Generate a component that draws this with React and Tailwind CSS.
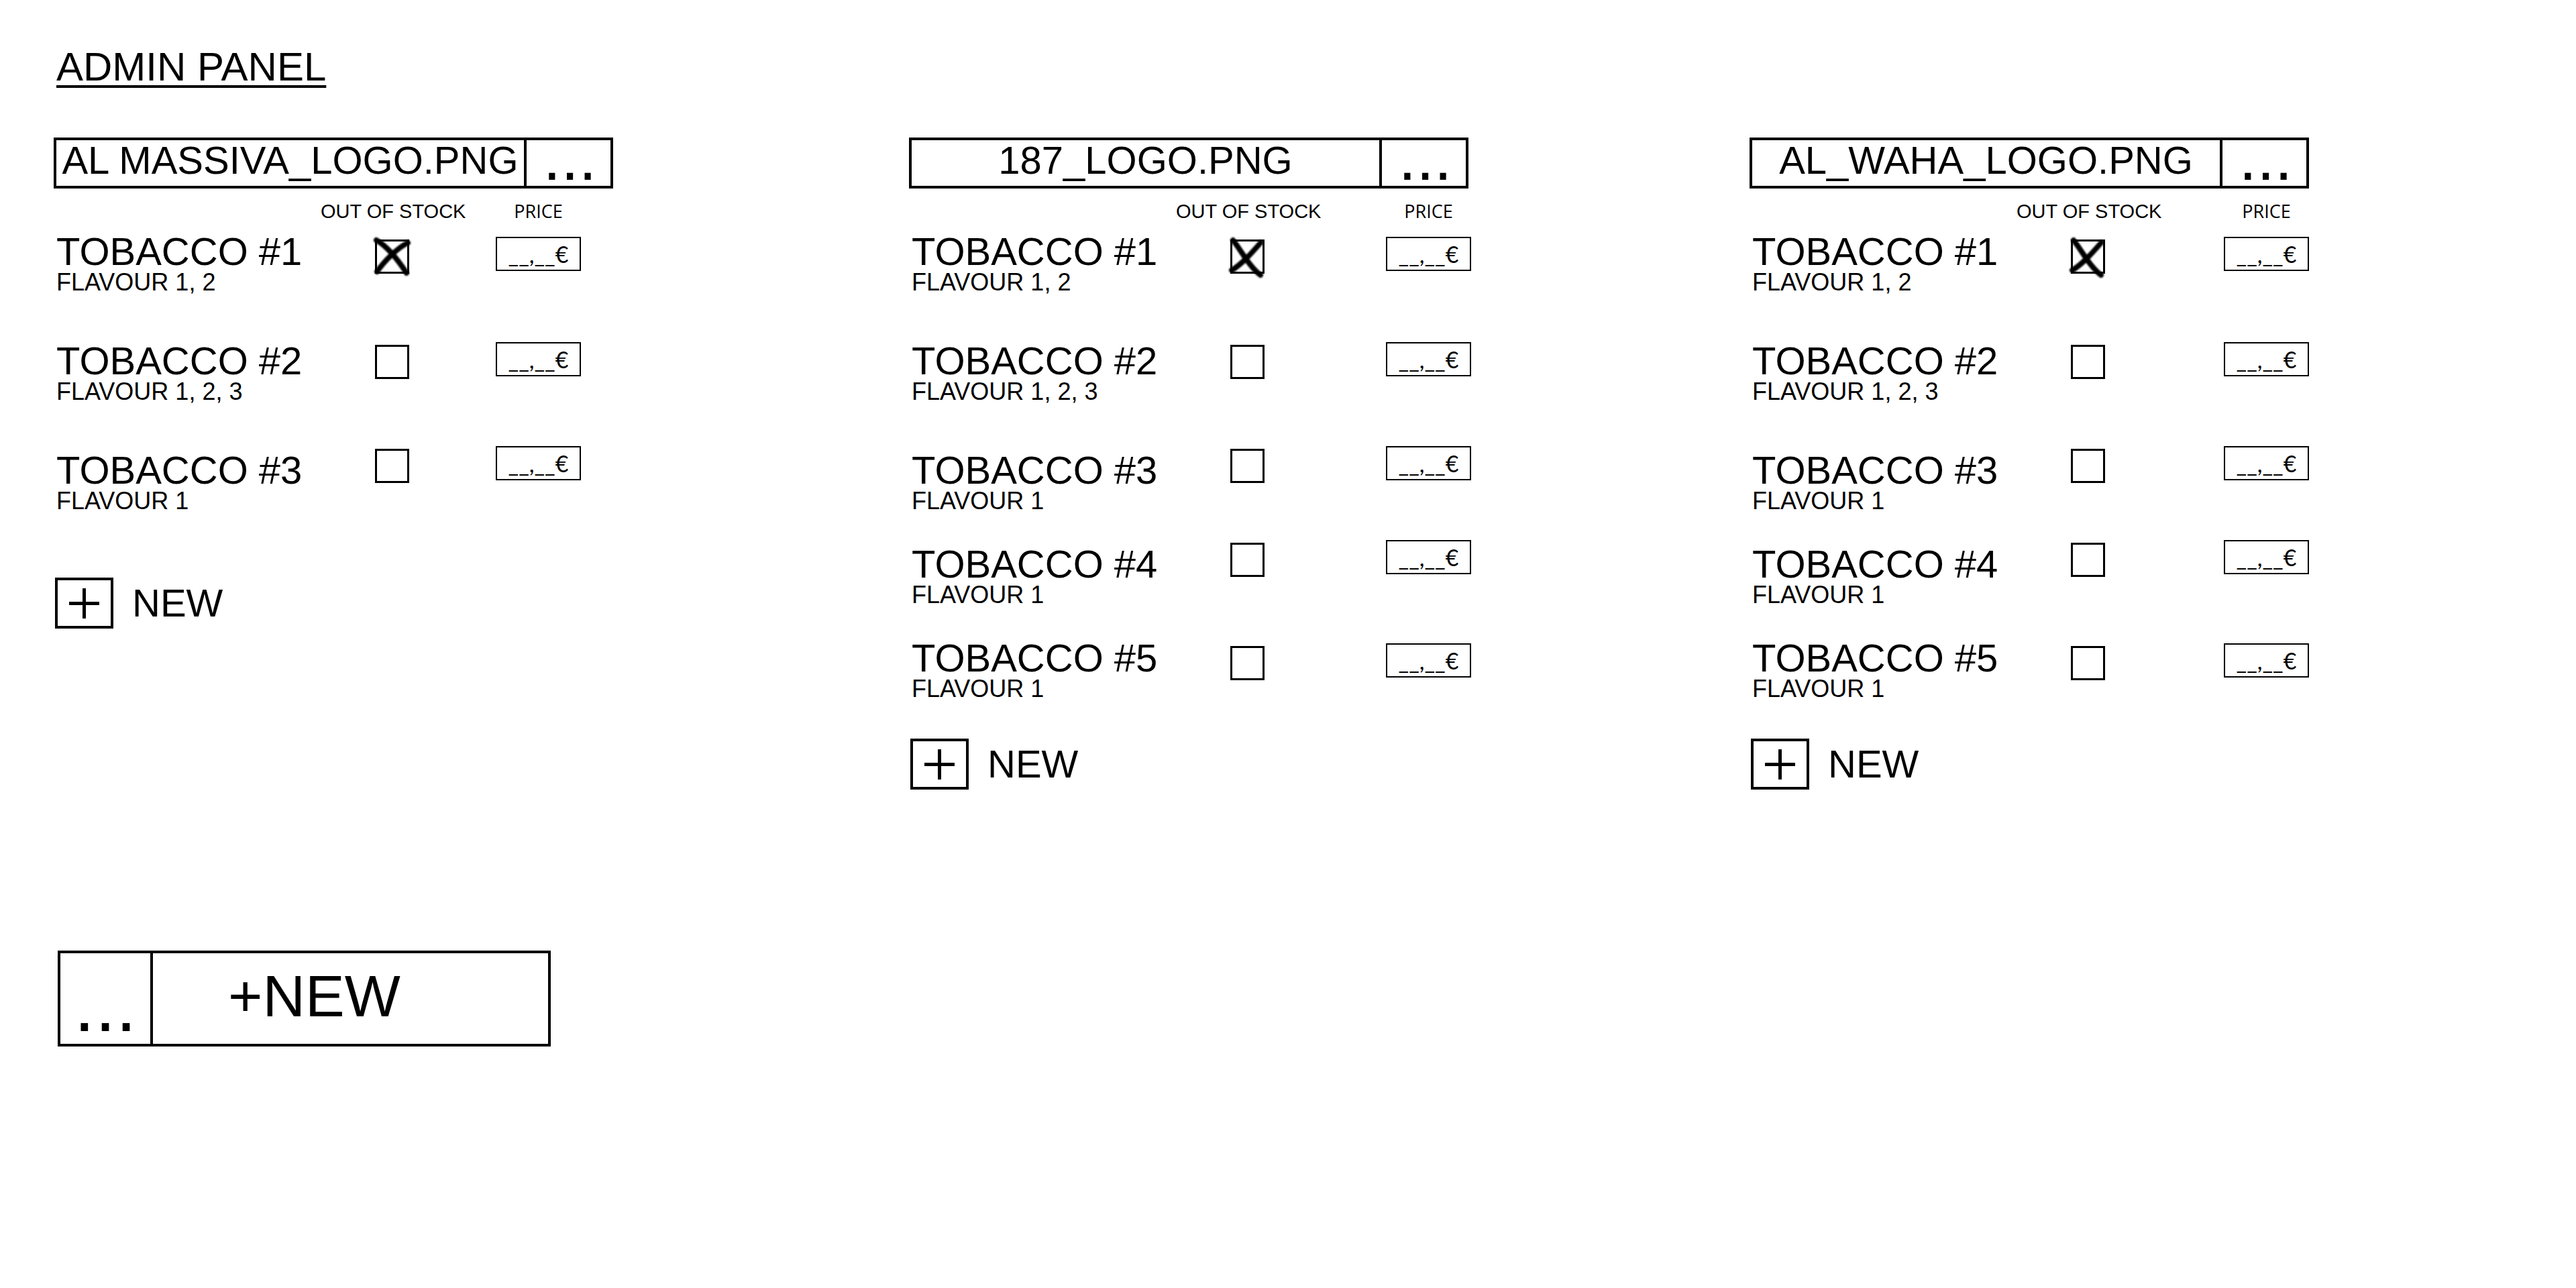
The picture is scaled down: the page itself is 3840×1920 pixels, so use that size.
import React from "react";

const FLAVOURS = ["FLAVOUR 1, 2", "FLAVOUR 1, 2, 3", "FLAVOUR 1", "FLAVOUR 1", "FLAVOUR 1"];

const BRANDS = [
  {
    file: "AL MASSIVA_LOGO.PNG",
    count: 3,
    priceCell: "mx-auto",
    newGap: "mt-[92px]",
    cross: "M2 1 C18 10 34 30 47 50 M49 5 C34 12 14 32 3 48",
  },
  {
    file: "187_LOGO.PNG",
    count: 5,
    priceCell: "ml-auto -mr-1",
    newGap: "mt-[52px]",
    cross: "M4 1 C16 16 28 40 45 53 M45 5 C32 20 18 36 2 46",
  },
  {
    file: "AL_WAHA_LOGO.PNG",
    count: 5,
    priceCell: "ml-auto",
    newGap: "mt-[52px]",
    cross: "M4 1 C16 16 28 40 45 53 M45 5 C32 20 18 36 2 46",
  },
];

const CONTROL_TOP = ["pt-3.5", "pt-2", "pt-0", "pt-0", "pt-3.5"];
const ROW_TOP = ["", "mt-[59px]", "mt-[59px]", "mt-9", "mt-9"];

function Cross({ d }) {
  return (
    <svg
      className="pointer-events-none absolute inset-0 size-full overflow-visible blur-[1px]"
      viewBox="0 0 51 51"
      fill="none"
      stroke="black"
      strokeWidth="8"
      strokeLinecap="round"
      aria-hidden="true"
    >
      <path d={d} />
    </svg>
  );
}

function Row({ brand, index }) {
  const name = `TOBACCO #${index + 1}`;
  const [out, setOut] = React.useState(index === 0);
  return (
    <li className={`flex items-start ${ROW_TOP[index]}`}>
      <div className="w-[398px] shrink-0 pt-3 pl-1">
        <h2 className="text-[58px] leading-12 whitespace-nowrap">{name}</h2>
        <p className="text-4xl leading-11 whitespace-nowrap">{FLAVOURS[index]}</p>
      </div>
      <div className={`flex flex-1 items-start ${CONTROL_TOP[index]}`}>
        <div className="flex w-[213px] shrink-0 justify-center pt-1">
          <span className="relative size-[51px]">
            <input
              type="checkbox"
              aria-label={`${name} out of stock`}
              checked={out}
              onChange={(e) => setOut(e.target.checked)}
              className="block size-full appearance-none border-3 border-black bg-white"
            />
            {out && <Cross d={brand.cross} />}
          </span>
        </div>
        <div className="flex-1">
          <input
            type="text"
            aria-label={`${name} price`}
            defaultValue="__,__€"
            className={`block h-[51px] w-[127px] border-2 border-black bg-white text-center font-['Lato'] text-[34px] ${brand.priceCell}`}
          />
        </div>
      </div>
    </li>
  );
}

function Brand({ brand }) {
  return (
    <section className="w-[834px]">
      <div className="flex h-[76px] border-4 border-black">
        <span className="flex-1 text-center text-[58px] leading-15 whitespace-nowrap">{brand.file}</span>
        <button
          type="button"
          aria-label="Choose logo file"
          className="flex w-[129px] items-start justify-center border-l-4 border-black pl-1 text-8xl leading-13"
        >
          ...
        </button>
      </div>
      <div className="flex pt-3.5 pb-1">
        <span className="ml-[398px] w-[213px] text-center text-[29px] leading-10 whitespace-nowrap">OUT OF STOCK</span>
        <div className="flex-1">
          <span className={`block w-[127px] text-center font-['Open_Sans'] text-[27px] leading-10 ${brand.priceCell}`}>
            PRICE
          </span>
        </div>
      </div>
      <ul>
        {Array.from({ length: brand.count }, (_, i) => (
          <Row key={i} brand={brand} index={i} />
        ))}
      </ul>
      <button type="button" className={`ml-0.5 flex items-center gap-7 text-[58px] leading-[74px] ${brand.newGap}`}>
        <span className="flex h-[76px] w-[87px] items-center justify-center border-4 border-black">
          <svg className="size-[45px]" viewBox="0 0 45 45" stroke="black" strokeWidth="5" aria-hidden="true">
            <path d="M22.5 0V45M0 22.5H45" />
          </svg>
        </span>
        NEW
      </button>
    </section>
  );
}

export default function App() {
  return (
    <main className="min-h-screen bg-white pt-17 pl-20 font-['Liberation_Sans',sans-serif] text-black">
      <h1 className="mb-[73px] pl-1 text-[60px] leading-16 underline decoration-4 underline-offset-[7px]">ADMIN PANEL</h1>
      <div className="grid grid-cols-[1275fr_1253fr_1232fr] items-start">
        {BRANDS.map((b) => (
          <Brand key={b.file} brand={b} />
        ))}
      </div>
      <div className="mt-60 ml-1.5 flex h-[143px] w-[735px] border-4 border-black">
        <button
          type="button"
          aria-label="Choose logo file for new brand"
          className="flex w-[138px] items-end justify-center border-r-4 border-black text-[112px] leading-[114px]"
        >
          ...
        </button>
        <button type="button" className="flex flex-1 items-start pl-28 text-[88px] leading-32">
          +NEW
        </button>
      </div>
    </main>
  );
}
